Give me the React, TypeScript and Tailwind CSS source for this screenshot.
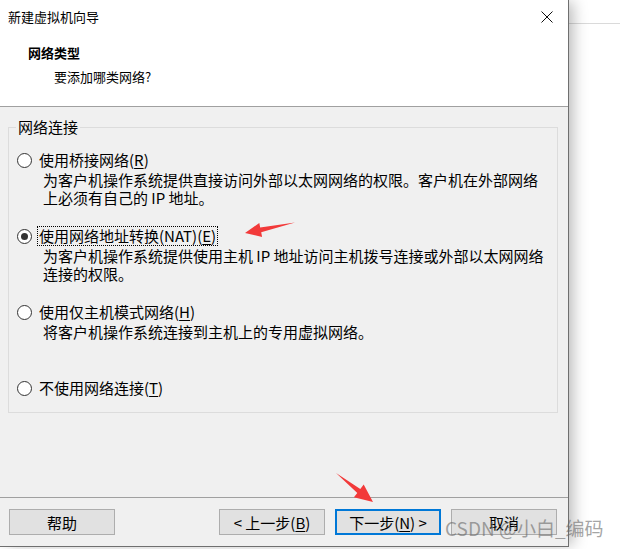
import React from "react";

const font = "font-['Noto_Sans_CJK_SC',sans-serif]";

function Radio({ checked }: { checked?: boolean }) {
	return (
		<span className="flex h-[15px] w-[15px] shrink-0 items-center justify-center rounded-full border border-[#333] bg-white">
			{checked && <span className="h-[7px] w-[7px] rounded-full bg-[#333]" />}
		</span>
	);
}

function Key({ k }: { k: string }) {
	return <span className="underline underline-offset-2">{k}</span>;
}

const options = [
	{
		label: "使用桥接网络",
		key: "R",
		lines: [
			"为客户机操作系统提供直接访问外部以太网网络的权限。客户机在外部网络",
			"上必须有自己的 IP 地址。",
		],
	},
	{
		label: "使用网络地址转换(NAT)",
		key: "E",
		checked: true,
		lines: [
			"为客户机操作系统提供使用主机 IP 地址访问主机拨号连接或外部以太网网络",
			"连接的权限。",
		],
	},
	{
		label: "使用仅主机模式网络",
		key: "H",
		lines: ["将客户机操作系统连接到主机上的专用虚拟网络。"],
	},
	{ label: "不使用网络连接", key: "T", lines: [] as string[] },
];

function Button({ children, focused }: { children: React.ReactNode; focused?: boolean }) {
	return (
		<button
			className={
				focused
					? "flex h-[26px] w-[106px] items-center justify-center border-2 border-[#0078d7] bg-[#e1e1e1] text-[15px] leading-none text-black"
					: "flex h-[26px] w-[106px] items-center justify-center border border-[#adadad] bg-[#e1e1e1] text-[15px] leading-none text-black"
			}
		>
			{children}
		</button>
	);
}

export default function App() {
	return (
		<div className={`relative flex h-[549px] w-[620px] overflow-hidden bg-white text-black ${font}`}>
			<div className="relative z-10 flex h-[547px] w-[569px] shrink-0 flex-col border-r border-b border-[#6f6f6f] bg-[#f0f0f0] shadow-[6px_0_14px_-2px_rgba(0,0,0,0.28)]">
				{/* header */}
				<div className="h-[107px] border-b border-[#a0a0a0] bg-white">
					<div className="flex h-[34px] items-center justify-between pl-2 pr-[15px]">
						<span className="text-[13px] leading-[18px]">新建虚拟机向导</span>
						<svg width="12" height="12" viewBox="0 0 12 12" fill="none" stroke="#111" strokeWidth="1">
							<path d="M0.5 0.5 L11.5 11.5 M11.5 0.5 L0.5 11.5" />
						</svg>
					</div>
					<div className="pl-[28px] pt-[10px]">
						<div className="text-[13px] font-bold leading-[18px]">网络类型</div>
						<div className="mt-[6px] pl-[26px] text-[13px] leading-[18px]">要添加哪类网络?</div>
					</div>
				</div>

				{/* body */}
				<div className="flex flex-1 flex-col">
					<fieldset className="mt-[10px] ml-2 w-[550px] border border-[#dcdcdc] px-2 pt-[12px] pb-[13px]">
						<legend className="-ml-px px-[2px] text-[15px] leading-[20px]">网络连接</legend>
						{options.map((o, i) => (
							<div key={i} className={i < options.length - 1 ? "mb-[18px]" : ""}>
								<div className="flex h-[22px] items-center">
									<Radio checked={o.checked} />
									<span
										className={
											o.checked
												? "ml-[5px] border border-dotted border-black px-px text-[15px] leading-[18px]"
												: "ml-[5px] border border-transparent px-px text-[15px] leading-[18px]"
										}
									>
										{o.label}(<Key k={o.key} />)
									</span>
								</div>
								{i < options.length - 1 && (
									<div className="h-[36px] pl-[26px] text-[15px] leading-[18px]">
										{o.lines.map((l, j) => (
											<div key={j} className="whitespace-nowrap">
												{l}
											</div>
										))}
									</div>
								)}
							</div>
						))}
					</fieldset>
				</div>

				{/* footer */}
				<div className="flex h-[49px] border-t border-[#a0a0a0] pt-[11px] pl-[9px] pr-[11px]">
					<Button>帮助</Button>
					<div className="flex-1" />
					<div className="flex gap-[10px]">
						<Button>
							&lt; 上一步(<Key k="B" />)
						</Button>
						<Button focused>
							下一步(<Key k="N" />) &gt;
						</Button>
						<Button>取消</Button>
					</div>
				</div>
			</div>

			{/* window behind */}
			<div className="flex-1">
				<div className="h-[24px] border-b border-[#dadada]" />
			</div>

			{/* annotations */}
			<svg className="pointer-events-none absolute inset-0 z-20" width="620" height="549">
				<polygon
					points="245,233 259.3,223 260.2,227.5 295,222.5 261.2,232.3 262.1,237 245,233"
					fill="#f23a3a"
				/>
				<polygon
					points="373,502 353.9,497.2 357.3,492.9 336,473 360.3,488.9 363.7,484.6 373,502"
					fill="#f23a3a"
				/>
			</svg>
			<div className="pointer-events-none absolute left-[445px] top-[516px] z-30 whitespace-nowrap text-[19px] leading-[24px] text-[rgba(105,105,105,0.6)]">
				CSDN @小白_编码
			</div>
		</div>
	);
}
